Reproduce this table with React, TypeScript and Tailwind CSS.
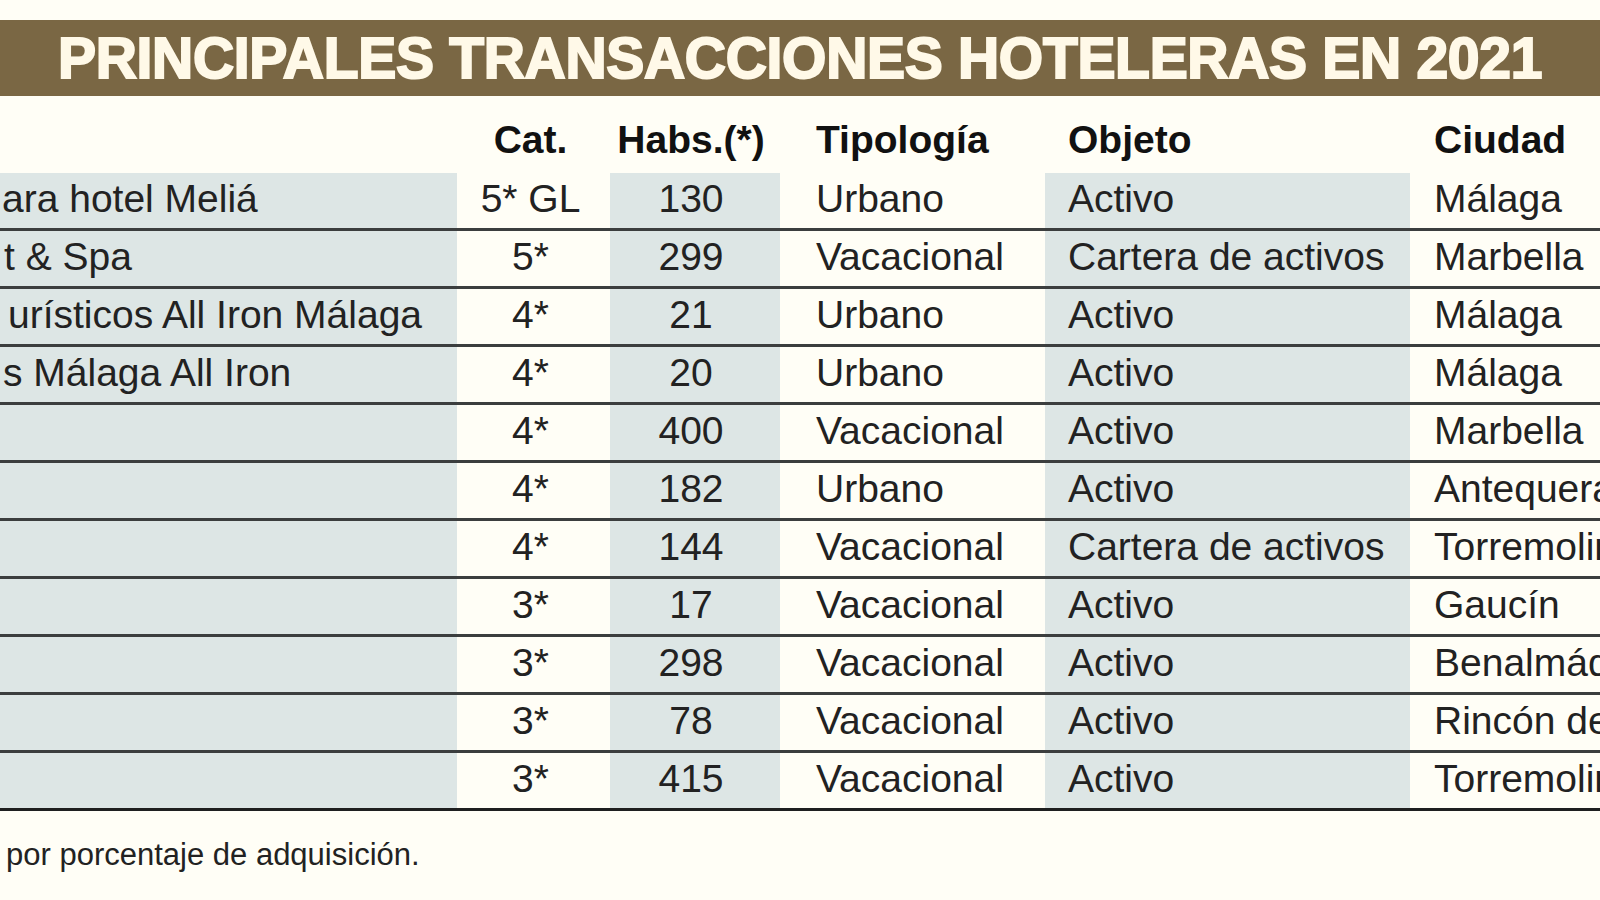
import React from 'react';

// Filas de la tabla (la columna de nombre viene recortada en el original)
const rows = [
  { name: 'ara hotel Meliá', nameOffset: 'ml-[2px]', cat: '5* GL', habs: '130', tipo: 'Urbano', objeto: 'Activo', ciudad: 'Málaga' },
  { name: 't & Spa', nameOffset: 'ml-[4px]', cat: '5*', habs: '299', tipo: 'Vacacional', objeto: 'Cartera de activos', ciudad: 'Marbella' },
  { name: 'urísticos All Iron Málaga', nameOffset: 'ml-[8px]', cat: '4*', habs: '21', tipo: 'Urbano', objeto: 'Activo', ciudad: 'Málaga' },
  { name: 's Málaga All Iron', nameOffset: 'ml-[3px]', cat: '4*', habs: '20', tipo: 'Urbano', objeto: 'Activo', ciudad: 'Málaga' },
  { name: '', nameOffset: '', cat: '4*', habs: '400', tipo: 'Vacacional', objeto: 'Activo', ciudad: 'Marbella' },
  { name: '', nameOffset: '', cat: '4*', habs: '182', tipo: 'Urbano', objeto: 'Activo', ciudad: 'Antequera' },
  { name: '', nameOffset: '', cat: '4*', habs: '144', tipo: 'Vacacional', objeto: 'Cartera de activos', ciudad: 'Torremolinos' },
  { name: '', nameOffset: '', cat: '3*', habs: '17', tipo: 'Vacacional', objeto: 'Activo', ciudad: 'Gaucín' },
  { name: '', nameOffset: '', cat: '3*', habs: '298', tipo: 'Vacacional', objeto: 'Activo', ciudad: 'Benalmádena' },
  { name: '', nameOffset: '', cat: '3*', habs: '78', tipo: 'Vacacional', objeto: 'Activo', ciudad: 'Rincón de la Victoria' },
  { name: '', nameOffset: '', cat: '3*', habs: '415', tipo: 'Vacacional', objeto: 'Activo', ciudad: 'Torremolinos' },
];

const cols = 'grid grid-cols-[457px_153px_170px_265px_365px_190px]';
const shade = 'bg-[#dde6e5]';

export default function App() {
  return (
    <div className="w-[1600px] h-[900px] overflow-hidden bg-[#fffef6] text-[#222] font-['Liberation_Sans',Arial,sans-serif] whitespace-nowrap">
      <div className="h-[20px]" />
      {/* Título */}
      <div className="h-[76px] bg-[#7a6744] flex items-center justify-center">
        <h1 className="text-[57px] leading-none font-bold tracking-[-0.3px] text-[#fff9e8] [-webkit-text-stroke:2px_#fff9e8]">
          PRINCIPALES TRANSACCIONES HOTELERAS EN 2021
        </h1>
      </div>

      {/* Cabecera */}
      <div className={`${cols} h-[77px] items-end pb-[14px] text-[39px] leading-none font-bold text-[#111]`}>
        <div />
        <div className="text-center pr-[6px]">Cat.</div>
        <div className="text-center pr-[8px]">Habs.(*)</div>
        <div className="pl-[36px]">Tipología</div>
        <div className="pl-[23px]">Objeto</div>
        <div className="pl-[24px]">Ciudad</div>
      </div>

      {/* Filas */}
      <div>
        {rows.map((r, i) => (
          <div
            key={i}
            className={`${cols} h-[58px] border-b-[3px] ${i === rows.length - 1 ? 'border-[#1e1f1f]' : 'border-[#3b3e3e]'} text-[39px] leading-none`}
          >
            <div className={`${shade} overflow-hidden flex items-center pb-[4px]`}>
              {r.name && <span className={r.nameOffset}>{r.name}</span>}
            </div>
            <div className="flex items-center justify-center pb-[4px] pr-[6px]">{r.cat}</div>
            <div className={`${shade} flex items-center justify-center pb-[4px] pr-[8px]`}>{r.habs}</div>
            <div className="flex items-center pb-[4px] pl-[36px]">{r.tipo}</div>
            <div className={`${shade} flex items-center pb-[4px] pl-[23px]`}>{r.objeto}</div>
            <div className="flex items-center pb-[4px] pl-[24px]">{r.ciudad}</div>
          </div>
        ))}
      </div>

      {/* Nota */}
      <p className="mt-[28px] ml-[6px] text-[31px] leading-none text-[#222]">
        por porcentaje de adquisición.
      </p>
    </div>
  );
}
